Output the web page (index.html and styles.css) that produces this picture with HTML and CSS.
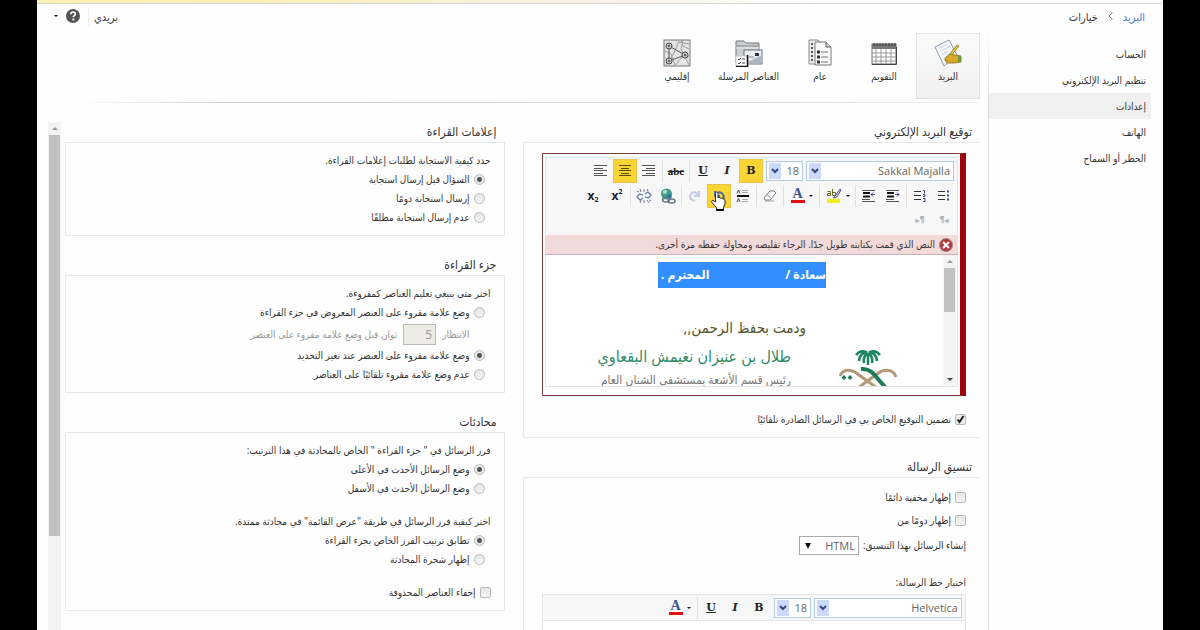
FILE: index.html
```html
<!DOCTYPE html>
<html lang="ar" dir="rtl">
<head>
    <meta charset="UTF-8">
    <meta name="viewport" content="width=device-width, initial-scale=1.0">
    <title>خيارات</title>
    <link rel="stylesheet" href="styles.css">
</head>
<body>
<div class="app">

    <div class="top-strip"></div>

    <header class="topbar">
        <nav class="breadcrumb">
            <a href="#">البريد</a>
            <svg width="5" height="8" viewBox="0 0 5 8"><path d="M4.500 .5L1 4l3.500 3.500" fill="none" stroke="#777"/></svg>
            <span>خيارات</span>
        </nav>
        <div class="account">
            <a href="#" class="my-mail">بريدي</a>
            <button class="icon-btn" aria-label="تعليمات">
                <svg width="14" height="14" viewBox="0 0 14 14"><circle cx="7" cy="7" r="7" fill="#555"/><path d="M4.800 5.200C4.800 3.700 5.800 3 7 3s2.300.7 2.300 2c0 1.600-2 1.600-2 3.300" fill="none" stroke="#fff" stroke-width="1.600"/><rect x="6.400" y="9.600" width="1.800" height="1.800" fill="#fff"/></svg>
            </button>
            <button class="icon-btn" aria-label="المزيد"><span class="caret"></span></button>
        </div>
    </header>

    <div class="layout">
        <nav class="sidebar">
            <a href="#">الحساب</a>
            <a href="#">تنظيم البريد الإلكتروني</a>
            <a href="#" class="active">إعدادات</a>
            <a href="#">الهاتف</a>
            <a href="#">الحظر أو السماح</a>
        </nav>

        <main class="main">
            <!-- Category tabs -->
            <div class="tabs">
                <button class="tab active">
                    <svg width="28" height="28" viewBox="0 0 28 28"><path d="M1 8L15 1l8 15-13 11z" fill="#f7fafc" stroke="#8a9aac"/><path d="M5 9l9-4M7 12l9-5M8 15l6-3" stroke="#c2ccd8"/><path d="M25 7l-9 11-2 2 1-4 8-10z" fill="#f0d040" stroke="#7a6a20" stroke-width=".8"/><path d="M11 19l5-4 5 1 6 1v6l-7 1-6 0c-2 0-2-2 0-2l-3 0z" fill="#d9a92c" stroke="#8d6a14" stroke-width=".8"/><path d="M24 17h3v6h-3z" fill="#6f9a3c"/></svg>
                    <span>البريد</span>
                </button>
                <button class="tab">
                    <svg width="28" height="28" viewBox="0 0 28 28"><rect x="2" y="5" width="24" height="20" fill="#fff" stroke="#666"/><rect x="2" y="5" width="24" height="5" fill="#777"/><path d="M4 4v3M7 4v3M10 4v3M13 4v3M16 4v3M19 4v3M22 4v3M25 4v3" stroke="#333"/><path d="M2 14h24M2 18h24M2 22h24M6 10v15M11 10v15M16 10v15M21 10v15" stroke="#999"/><path d="M2 25.500h24.500V8" fill="none" stroke="#444"/></svg>
                    <span>التقويم</span>
                </button>
                <button class="tab">
                    <svg width="28" height="28" viewBox="0 0 28 28"><path d="M3 1h9l3 3v21H3z" fill="#eee" stroke="#888"/><path d="M5 5h2M5 9h2M5 13h2M5 17h2M5 21h2" stroke="#555" stroke-width="2"/><path d="M9 3h11l5 5v18H9z" fill="#fafafa" stroke="#777"/><path d="M20 3v5h5" fill="#ccc" stroke="#666"/><path d="M15 13h7M15 18h7M15 23h7" stroke="#777"/><path d="M11 13h3M11 18h3M11 23h3" stroke="#333" stroke-width="3"/></svg>
                    <span>عام</span>
                </button>
                <button class="tab">
                    <svg width="28" height="28" viewBox="0 0 28 28"><path d="M1 2h8l2 2h13v20H1z" fill="#c9cdd1" stroke="#777"/><path d="M2 7h21" stroke="#888"/><path d="M1 9h23" stroke="#eee"/><rect x="9" y="11" width="18" height="14" fill="#eef0f3" stroke="#67717d"/><path d="M10 24h17v-8z" fill="#aeb7c1"/><path d="M20 14h4v3h-4z" fill="#334"/><path d="M12 18h7" stroke="#889"/><rect x="1" y="17" width="12" height="11" fill="#fff" stroke="#ccc"/><path d="M12.500 16v12M1 27.500h12" stroke="#111" stroke-width="1.500"/><path d="M3 20l1 1 2-2M3 24l1 1 2-2M7 20h3M7 24h3" fill="none" stroke="#444"/></svg>
                    <span>العناصر المرسلة</span>
                </button>
                <button class="tab">
                    <svg width="28" height="28" viewBox="0 0 28 28"><rect x="1" y="1" width="26" height="26" fill="#e4e4e4" stroke="#777"/><path d="M3 26l8-12 5-12M12 27l6-8 8-2M18 1l2 6 6 3M2 12l6 3 4 11M16 3l10 2M20 1l-2 9 8 16" fill="none" stroke="#a0a0a0"/><path d="M6 7l16 9L6 22z" fill="none" stroke="#555"/><g fill="#ccc" stroke="#444"><circle cx="6" cy="7" r="3"/><circle cx="22" cy="16" r="3"/><circle cx="6" cy="22" r="3"/></g><g fill="#333"><circle cx="6" cy="7" r="1"/><circle cx="22" cy="16" r="1"/><circle cx="6" cy="22" r="1"/></g></svg>
                    <span>إقليمي</span>
                </button>
            </div>

            <div class="pane">
                <!-- Signature and message format -->
                <div class="column">
                    <section class="group open">
                        <h2>توقيع البريد الإلكتروني</h2>
                        <div class="box signature-box">
                            <div class="invalid">
                                <div class="toolbar">
                                    <div class="tool-row">
                                        <select class="pick pick-font" aria-label="الخط"><option>Sakkal Majalla</option></select>
                                        <select class="pick pick-size" aria-label="الحجم"><option>18</option></select>
                                        <div class="tools">
                                            <button class="tool on"><b>B</b></button>
                                            <button class="tool"><i>I</i></button>
                                            <button class="tool"><u>U</u></button>
                                            <span class="sep"></span>
                                            <button class="tool strike"><s>abc</s></button>
                                            <span class="sep"></span>
                                            <button class="tool" aria-label="محاذاة إلى اليمين"><svg width="14" height="12" viewBox="0 0 14 12"><path d="M0 .5h13M4 3.500h9M0 5.500h13M4 8.500h9M0 10.500h13" stroke="#555"/></svg></button>
                                            <button class="tool on" aria-label="توسيط"><svg width="14" height="12" viewBox="0 0 14 12"><path d="M1 .5h12M3 3.500h8M1 5.500h12M3 8.500h8M1 10.500h12" stroke="#554a10"/></svg></button>
                                            <button class="tool" aria-label="محاذاة إلى اليسار"><svg width="14" height="12" viewBox="0 0 14 12"><path d="M0 .5h13M0 3.500h9M0 5.500h13M0 8.500h9M0 10.500h13" stroke="#555"/></svg></button>
                                        </div>
                                    </div>
                                    <div class="tool-row">
                                        <div class="tools">
                                            <button class="tool" aria-label="تعداد نقطي"><svg width="14" height="14" viewBox="0 0 14 14"><path d="M1 2.500h7M1 6.500h7M1 10.500h7" stroke="#333"/><path d="M10 2.500h2M10 6.500h2M10 10.500h2" stroke="#3b4a8c" stroke-width="2"/></svg></button>
                                            <button class="tool" aria-label="تعداد رقمي"><svg width="14" height="14" viewBox="0 0 14 14"><path d="M1 2.500h7M1 6.500h7M1 10.500h7" stroke="#333"/><path d="M10 1.500h1.500v3M10 5.500h2v2h-2M10 9.500h2v3h-2" fill="none" stroke="#3b4a8c"/></svg></button>
                                            <span class="sep"></span>
                                            <button class="tool" aria-label="إنقاص المسافة"><svg width="14" height="14" viewBox="0 0 14 14"><path d="M0 1.500h13M0 12.500h13M0 10.500h8" stroke="#555"/><path d="M1 4h7M1 7.500h7" stroke="#111" stroke-width="2"/><path d="M9 5.500h4M11 3.500l2 2-2 2" fill="none" stroke="#3b4a8c"/></svg></button>
                                            <button class="tool" aria-label="زيادة المسافة"><svg width="14" height="14" viewBox="0 0 14 14"><path d="M0 1.500h13M0 12.500h13M0 10.500h8" stroke="#555"/><path d="M1 4h7M1 7.500h7" stroke="#111" stroke-width="2"/><path d="M9 5.500h4M11 3.500l-2 2 2 2" fill="none" stroke="#3b4a8c"/></svg></button>
                                            <span class="sep"></span>
                                            <button class="tool drop" aria-label="لون التمييز"><span class="caret"></span><svg width="16" height="16" viewBox="0 0 16 16"><path d="M1.500 3.500h3v4h-3v-2h3M6.500 1v6.500h3v-3h-3" fill="none" stroke="#666b20"/><path d="M14 1L9 8l-2 2 4-1 4-7z" fill="#c9d7ea" stroke="#557"/><rect x="1" y="11" width="13" height="4" fill="#f5ee18"/></svg></button>
                                            <span class="sep"></span>
                                            <button class="tool drop font-color" aria-label="لون الخط"><span class="caret"></span><span class="swatch">A</span></button>
                                            <span class="sep"></span>
                                            <button class="tool" aria-label="مسح التنسيق"><svg width="14" height="14" viewBox="0 0 14 14"><path d="M1 9l6-7h4l2 2-6 7H2z" fill="#fff" stroke="#778"/><path d="M4 6l4 3M2 12h9" stroke="#99a"/></svg></button>
                                            <span class="sep"></span>
                                            <button class="tool" aria-label="خط أفقي"><svg width="14" height="14" viewBox="0 0 14 14"><path d="M1 7h12" stroke="#111" stroke-width="2"/><path d="M1 4.500L2.500 1 4 4.500M1 13l1.500-3.500L4 13" fill="none" stroke="#444"/><path d="M6 1.500h6M6 3.500h6M6 10.500h6M6 12.500h6" stroke="#aaa"/></svg></button>
                                            <button class="tool on undo" aria-label="تراجع"><svg width="14" height="14" viewBox="0 0 14 14"><path d="M5 12c6 0 8-3 6-6.500C9 2 5 3 4 6M3 2v5h5" fill="none" stroke="#4a6ea8" stroke-width="2"/></svg>
                                                <svg class="hand" width="15" height="20" viewBox="0 0 15 20"><path d="M4.500 11V2.500C4.500.5 7 .5 7 2.500V7c.5-1 2.300-.8 2.500.5.600-1 2.200-.6 2.400.7.800-.6 2.100-.2 2.100 1.300V13l-1.500 3.500V19H5.500v-2.500L1 11.500c-1-1.500.5-2.800 2-1.500z" fill="#fff" stroke="#222"/><path d="M5 19h8" stroke="#000" stroke-width="2"/></svg>
                                            </button>
                                            <button class="tool" aria-label="إعادة"><svg width="14" height="14" viewBox="0 0 14 14"><path d="M7 12C2 11 1 8 3 5c2-3 6-2 7 1M11 2v5H6" fill="none" stroke="#c3cde2" stroke-width="2"/></svg></button>
                                            <span class="sep"></span>
                                            <button class="tool" aria-label="ارتباط"><svg width="16" height="16" viewBox="0 0 16 16"><circle cx="6.500" cy="6" r="5.500" fill="#3f9a8c"/><path d="M3 3c2-2 5-1 4 1s-3 3-4 1z" fill="#b4e3c4"/><path d="M7 8l3-2 2 3-2 2z" fill="#2c6e9e"/><g fill="none" stroke="#5f7886" stroke-width="1.500"><ellipse cx="6" cy="12" rx="3.500" ry="2"/><ellipse cx="11.500" cy="13" rx="3.500" ry="2"/></g></svg></button>
                                            <button class="tool" aria-label="إزالة الارتباط"><svg width="16" height="14" viewBox="0 0 16 14"><g fill="none" stroke="#6a8bb0" stroke-width="1.500"><path d="M7 6L3.500 5 1 8l3 3 3-2M9 8l3.500 1L15 6l-3-3-3 2"/></g><path d="M5 3L4 0M8 3V0M11 2l1-2M5 11l-1 3M8 11v3M11 11l2 3M3 3L1 2M13 11l2 1" stroke="#778"/></svg></button>
                                            <span class="sep"></span>
                                            <button class="tool script">x<sup>2</sup></button>
                                            <button class="tool script">x<sub>2</sub></button>
                                        </div>
                                    </div>
                                    <div class="tool-row">
                                        <div class="tools">
                                            <button class="tool para">¶◂</button>
                                            <button class="tool para">▸¶</button>
                                        </div>
                                    </div>
                                </div>
                                <div class="error">
                                    <svg width="14" height="14" viewBox="0 0 14 14"><circle cx="7" cy="7" r="6.500" fill="#b9343c" stroke="#8f8f8f"/><path d="M4 4l6 6M10 4l-6 6" stroke="#fff" stroke-width="2.200"/></svg>
                                    <span>النص الذي قمت بكتابته طويل جدًا. الرجاء تقليصه ومحاولة حفظه مرة أخرى.</span>
                                </div>
                                <div class="editor">
                                    <div class="scrollbar">
                                        <span class="arrow up"></span>
                                        <span class="thumb"></span>
                                        <span class="arrow down"></span>
                                    </div>
                                    <div class="editor-text">
                                        <p class="greeting"><span>سعادة /</span><span>المحترم .</span></p>
                                        <p class="closing">ودمت بحفظ الرحمن,,</p>
                                        <div class="signer">
                                            <svg class="emblem" width="60" height="44" viewBox="0 0 60 44"><g fill="none" stroke="#1c8560" stroke-width="2.600"><path d="M29 5v12M28 5c-3-3-8-2-11 2M30 5c3-3 8-2 11 2M28 4c-4 0-8 4-8 9M30 4c4 0 8 4 8 9M28 5c-2 2-4 5-3 10M30 5c2 2 4 5 3 10"/></g><path d="M1 28c4-9 13-6 19-1l18 13" fill="none" stroke="#b29a78" stroke-width="3"/><path d="M57 29c-3-9-13-8-19-3L19 40" fill="none" stroke="#b29a78" stroke-width="3"/><path d="M22 21c8-1 13 4 17 10l8 9" fill="none" stroke="#1c7a55" stroke-width="4"/><path d="M5 27l2.500 2.500L5 32l-2.500-2.500zM11 27l2.500 2.500L11 32l-2.500-2.500z" fill="#1c7a55"/></svg>
                                            <div>
                                                <p class="name">طلال بن عنيزان نغيمش البقعاوي</p>
                                                <p class="job">رئيس قسم الأشعة بمستشفى الشنان العام</p>
                                            </div>
                                        </div>
                                    </div>
                                </div>
                            </div>
                            <label class="option include"><input type="checkbox" checked>تضمين التوقيع الخاص بي في الرسائل الصادرة تلقائيًا</label>
                        </div>
                    </section>

                    <section class="group open">
                        <h2>تنسيق الرسالة</h2>
                        <div class="box format-box">
                            <label class="option"><input type="checkbox">إظهار مخفية دائمًا</label>
                            <label class="option"><input type="checkbox">إظهار دومًا من</label>
                            <div class="format-row">
                                <label for="format">إنشاء الرسائل بهذا التنسيق:</label>
                                <select id="format" class="format-select"><option>HTML</option></select>
                            </div>
                            <label class="font-label" for="msgFont">اختيار خط الرسالة:</label>
                            <div class="message-font">
                                <div class="toolbar">
                                    <div class="tool-row">
                                        <select id="msgFont" class="pick pick-font"><option>Helvetica</option></select>
                                        <select class="pick pick-size" aria-label="الحجم"><option>18</option></select>
                                        <div class="tools">
                                            <button class="tool"><b>B</b></button>
                                            <button class="tool"><i>I</i></button>
                                            <button class="tool"><u>U</u></button>
                                            <span class="sep"></span>
                                            <button class="tool drop font-color" aria-label="لون الخط"><span class="caret"></span><span class="swatch">A</span></button>
                                        </div>
                                    </div>
                                </div>
                                <div class="preview"></div>
                            </div>
                        </div>
                    </section>
                </div>

                <!-- Reading options -->
                <div class="column">
                    <section class="group">
                        <h2>إعلامات القراءة</h2>
                        <div class="box">
                            <p>حدد كيفية الاستجابة لطلبات إعلامات القراءة.</p>
                            <label class="option radio"><input type="radio" name="receipt" checked>السؤال قبل إرسال استجابة</label>
                            <label class="option radio"><input type="radio" name="receipt">إرسال استجابة دومًا</label>
                            <label class="option radio"><input type="radio" name="receipt">عدم إرسال استجابة مطلقًا</label>
                        </div>
                    </section>

                    <section class="group">
                        <h2>جزء القراءة</h2>
                        <div class="box">
                            <p>اختر متى ينبغي تعليم العناصر كمقروءة.</p>
                            <label class="option radio"><input type="radio" name="mark">وضع علامة مقروء على العنصر المعروض في جزء القراءة</label>
                            <div class="wait">
                                <label for="wait">الانتظار</label>
                                <input id="wait" type="text" value="5" disabled>
                                <span>ثوان قبل وضع علامة مقروء على العنصر</span>
                            </div>
                            <label class="option radio"><input type="radio" name="mark" checked>وضع علامة مقروء على العنصر عند تغير التحديد</label>
                            <label class="option radio"><input type="radio" name="mark">عدم وضع علامة مقروء تلقائيًا على العناصر</label>
                        </div>
                    </section>

                    <section class="group">
                        <h2>محادثات</h2>
                        <div class="box">
                            <p>فرز الرسائل في " جزء القراءة " الخاص بالمحادثة في هذا الترتيب:</p>
                            <label class="option radio"><input type="radio" name="sort" checked>وضع الرسائل الأحدث في الأعلى</label>
                            <label class="option radio"><input type="radio" name="sort">وضع الرسائل الأحدث في الأسفل</label>
                            <p class="spaced">اختر كيفية فرز الرسائل في طريقة "عرض القائمة" في محادثة ممتدة.</p>
                            <label class="option radio"><input type="radio" name="tree" checked>تطابق ترتيب الفرز الخاص بجزء القراءة</label>
                            <label class="option radio"><input type="radio" name="tree">إظهار شجرة المحادثة</label>
                            <label class="option spaced"><input type="checkbox">إخفاء العناصر المحذوفة</label>
                        </div>
                    </section>
                </div>

                <div class="scrollbar page-scroll">
                    <span class="arrow up"></span>
                    <span class="thumb"></span>
                </div>
            </div>
        </main>
    </div>
</div>
</body>
</html>
```

FILE: styles.css
```css
* {
    box-sizing: border-box;
}
body {
    margin: 0;
    background-color: #000;
    color: #333;
    font-family: "Open Sans", "DejaVu Sans Condensed", "DejaVu Sans", sans-serif;
    font-size: 10px;
    line-height: 19px;
}
h2, p {
    margin: 0;
    font-weight: normal;
}
a {
    color: inherit;
    text-decoration: none;
}
button, select, input {
    font-family: inherit;
    font-size: inherit;
    color: inherit;
    margin: 0;
}
button {
    border: none;
    background: none;
    padding: 0;
}
svg {
    display: block;
    flex-shrink: 0;
}

.app {
    display: flex;
    flex-direction: column;
    height: 100vh;
    margin: 0 37px;
    background-color: #fefefe;
    overflow: hidden;
}
.top-strip {
    flex-shrink: 0;
    height: 4px;
    background: linear-gradient(to right, #fdf3b4, #faf0b8 20%, #f7f2ea 50%, #fff 70%);
    border-bottom: 1px solid #d8d8d4;
}

/* Top bar */
.topbar {
    display: flex;
    flex-shrink: 0;
    justify-content: space-between;
    align-items: center;
    height: 24px;
    padding: 0 18px 0 17px;
    font-size: 11px;
}
.breadcrumb, .account {
    display: flex;
    align-items: center;
    gap: 10px;
}
.account {
    gap: 8px;
}
.breadcrumb a {
    color: #3f7cc4;
}
.my-mail {
    padding-left: 5px;
    border-left: 1px solid #eee;
}
.icon-btn {
    display: flex;
    align-items: center;
}
.caret {
    border: 2px solid transparent;
    border-top-color: #111;
    border-bottom: none;
}

/* Sidebar */
.layout {
    display: flex;
    flex: 1;
    min-height: 0;
}
.sidebar {
    flex: 0 0 175px;
    padding: 13px 12px 0 0;
    border-left: 1px solid;
    border-image: linear-gradient(#fff, #ddd 80px) 1;
}
.sidebar a {
    display: block;
    height: 26px;
    padding-right: 5px;
    line-height: 26px;
}
.sidebar .active {
    background-color: #f0f0f0;
}
.main {
    display: flex;
    flex: 1;
    flex-direction: column;
    min-width: 0;
    padding: 5px 8px 0 11px;
}

/* Tabs */
.tabs {
    display: flex;
    flex-shrink: 0;
    height: 70px;
    padding-bottom: 3px;
    border-bottom: 1px solid;
    border-image: linear-gradient(to right, #fff 3%, #ccc 20%, #ddd 80%, #f0f0f0) 1;
}
.tab {
    display: flex;
    flex-direction: column;
    align-items: center;
    min-width: 64px;
    padding: 5px 8px;
    line-height: 18px;
    border: 1px solid transparent;
}
.tab.active {
    background: linear-gradient(#fbfbfb, #f0f0f0);
    border-color: #e4e4e4;
}

/* Content columns */
.pane {
    display: grid;
    grid-template-columns: 458fr 462fr 13px;
    grid-template-rows: minmax(0, 1fr);
    flex: 1;
    min-height: 0;
    padding-top: 19px;
}
.column {
    min-width: 0;
}
.column + .column {
    margin: 0 18px 0 4px;
}
.group {
    margin-bottom: 19px;
}
.group h2 {
    height: 20px;
    padding-right: 8px;
    font-size: 12px;
    line-height: 19px;
}
.box {
    padding: 8px 13px;
    border: 1px solid #e8e8e8;
}
.open .box {
    padding: 10px 14px 8px 18px;
    border-right: none;
}
.option {
    display: flex;
    align-items: center;
    gap: 4px;
}
.option.radio {
    padding-right: 6px;
}
.spaced {
    margin-top: 14px;
}
.option input {
    flex-shrink: 0;
    width: 11px;
    height: 11px;
    appearance: none;
    background: linear-gradient(#e6e6e6, #f4f4f4);
    border: 1px solid #b8b8b8;
    border-radius: 2px;
}
.option input[type="radio"] {
    border-radius: 50%;
}
.option input[type="radio"]:checked {
    background: radial-gradient(#555 0 2px, #e8e8e8 3px);
}
.option input[type="checkbox"]:checked {
    background: url("data:image/svg+xml,%3Csvg xmlns='http://www.w3.org/2000/svg' viewBox='0 0 9 9'%3E%3Cpath d='M1.500 4.500l2 2.500 4-6' fill='none' stroke='%23222' stroke-width='2'/%3E%3C/svg%3E") #eee;
}
.wait {
    display: flex;
    align-items: center;
    gap: 6px;
    height: 24px;
    padding-right: 21px;
    color: #999;
}
.wait input {
    width: 33px;
    height: 21px;
    padding: 0 3px;
    background-color: #ecece4;
    border: 1px solid #bbb;
    font-size: 12px;
}

/* Signature editor */
.invalid {
    padding: 3px 2px 8px;
    border: 1px solid #7d3c42;
    border-right: 6px solid #a00008;
}
.toolbar {
    background-color: #f7f7f7;
    border: 1px solid #e4e4e4;
}
.invalid .toolbar {
    height: 78px;
    border-bottom: none;
}
.tool-row {
    display: flex;
    align-items: center;
    gap: 3px;
    height: 25px;
    padding-right: 3px;
}
.invalid .tool-row + .tool-row {
    padding-right: 1px;
}
.tools {
    display: flex;
    align-items: center;
}
.tool {
    display: flex;
    position: relative;
    align-items: center;
    justify-content: center;
    width: 24px;
    height: 24px;
    color: #222;
    font-family: "DejaVu Serif", serif;
    font-size: 11px;
    font-weight: bold;
}
.tool.on {
    background-color: #fad534;
    border: 1px solid #e6c34a;
}
.tool.drop {
    gap: 4px;
    width: 33px;
}
.sep {
    width: 1px;
    height: 22px;
    margin: 0 1px;
    background-color: #e0e0e0;
}
.strike {
    font-family: "Liberation Serif", serif;
    font-size: 11px;
}
.script {
    font-family: "Open Sans", sans-serif;
    font-size: 12px;
    direction: ltr;
}
.script sup, .script sub {
    font-size: 7px;
    line-height: 8px;
}
.script sup {
    align-self: flex-start;
    margin-top: 4px;
}
.script sub {
    align-self: flex-end;
    margin-bottom: 4px;
}
.para {
    color: #aaa;
    font-family: "DejaVu Sans", sans-serif;
    font-size: 8px;
    direction: ltr;
}
.swatch {
    width: 14px;
    height: 15px;
    border-bottom: 3px solid #e01010;
    color: #3d5590;
    font-family: "Liberation Serif", serif;
    font-size: 14px;
    line-height: 12px;
}
.hand {
    position: absolute;
    top: 6px;
    left: 3px;
}
.pick {
    height: 20px;
    padding: 0 3px 0 18px;
    appearance: none;
    background: url("data:image/svg+xml,%3Csvg xmlns='http://www.w3.org/2000/svg' width='12' height='16'%3E%3Crect width='12' height='16' fill='%23ccd9fb'/%3E%3Cpath d='M3 6l3 3 3-3' fill='none' stroke='%23354a86' stroke-width='2'/%3E%3C/svg%3E") 2px center no-repeat #fff;
    border: 1px solid #b5cbe0;
    border-radius: 0;
    color: #666;
    font-size: 11px;
    line-height: 16px;
}
.pick-font {
    width: 148px;
}
.pick-size {
    width: 37px;
}
.error {
    display: flex;
    align-items: center;
    gap: 4px;
    height: 20px;
    padding-right: 5px;
    background-color: #f3dada;
    border-bottom: 1px solid #c9b0b4;
}
.editor {
    display: flex;
    height: 132px;
    background-color: #fff;
    border: 1px solid #e4e4e4;
    border-top: none;
    overflow: hidden;
}
.editor-text {
    flex: 1;
    padding: 7px 44px 0 0;
    white-space: nowrap;
}
.greeting {
    display: flex;
    justify-content: space-between;
    width: 168px;
    height: 26px;
    margin-right: 73px;
    background-color: #338fff;
    color: #fff;
    font-size: 12px;
    font-weight: bold;
    line-height: 25px;
    padding-left: 3px;
}
.closing {
    margin: 28px 93px 0 0;
    color: #55552f;
    font-size: 15px;
    line-height: 22px;
}
.signer {
    display: flex;
    gap: 48px;
    margin-top: 6px;
}
.emblem {
    margin-top: 4px;
}
.name {
    color: #2f8a68;
    font-size: 16px;
    line-height: 24px;
}
.job {
    color: #777;
    font-size: 12px;
    line-height: 24px;
}

/* Scrollbars */
.scrollbar {
    display: flex;
    flex-direction: column;
    align-items: center;
    width: 13px;
    background-color: #f3f3f3;
}
.editor .scrollbar {
    margin-right: 1px;
}
.arrow {
    margin: 5px 0;
    border: 3px solid transparent;
}
.arrow.up {
    border-top: none;
    border-bottom-color: #999;
}
.arrow.down {
    margin-top: auto;
    border-bottom: none;
    border-top-color: #444;
}
.thumb {
    width: 11px;
    height: 44px;
    background-color: #c1c1c1;
}
.page-scroll .thumb {
    height: 79%;
}
.include {
    margin: 14px 0 0;
}

/* Message format */
.open .format-box {
    padding-top: 8px;
}
.format-box .option {
    height: 23px;
}
.format-row {
    display: flex;
    align-items: center;
    gap: 4px;
    height: 27px;
}
.format-select {
    width: 60px;
    height: 19px;
    padding: 0 3px;
    appearance: none;
    background: url("data:image/svg+xml,%3Csvg xmlns='http://www.w3.org/2000/svg' width='6' height='6'%3E%3Cpath d='M0 0h6l-3 6z' fill='%23111'/%3E%3C/svg%3E") 5px center no-repeat #fff;
    border: 1px solid #aaa;
    border-radius: 0;
    color: #666;
    font-size: 11px;
}
.font-label {
    display: block;
    margin-top: 14px;
}
.message-font {
    margin-top: 2px;
}
.preview {
    height: 60px;
    border: 1px solid #e4e4e4;
    border-top: none;
    background-color: #fff;
}
```
